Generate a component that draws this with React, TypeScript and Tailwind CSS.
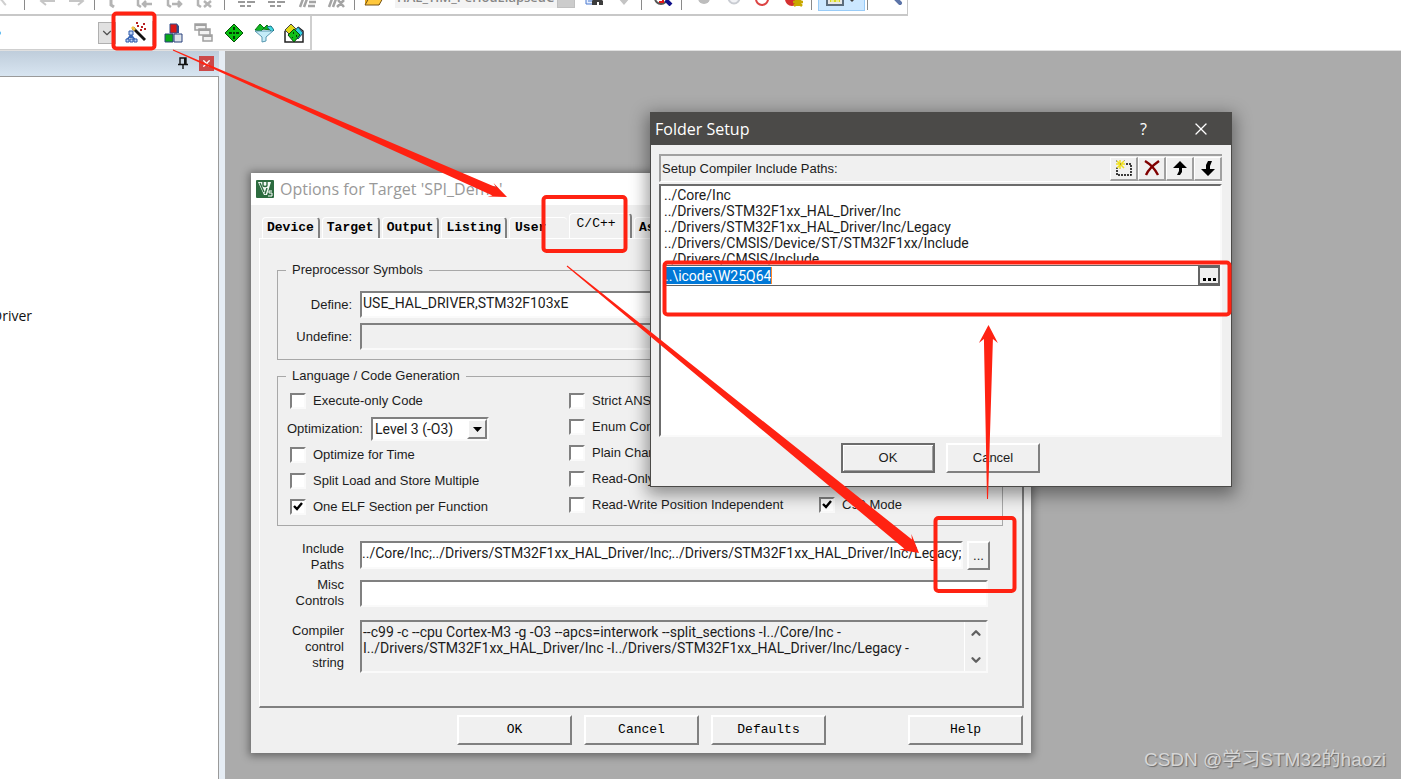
import type { ReactNode } from "react";
import { ChevronDown, ChevronUp, X } from "lucide-react";

const sunken = "border-2 border-t-[#808080] border-l-[#808080] border-r-[#fafafa] border-b-[#fafafa]";
const raised = "border-2 border-t-white border-l-white border-r-[#808080] border-b-[#808080]";
const fieldText = "font-['Roboto',sans-serif] text-[14px]";

const Separator = () => <span className="h-[18px] w-px shrink-0 bg-[#8a8a8a]" />;

const ToolButton = ({ label, children }: { label: string; children: ReactNode }) => (
  <button type="button" aria-label={label} className="flex w-[30px] shrink-0 justify-center">
    {children}
  </button>
);

const Icon = ({ children }: { children: ReactNode }) => (
  <svg width="20" height="20" viewBox="0 0 20 20" fill="none">
    {children}
  </svg>
);

const TopToolbar = () => (
  <div className="flex h-4 w-[908px] items-end border-r border-b-2 border-[#c8c8c8] bg-white pb-1">
    <div className="flex w-6 shrink-0 pb-1">
      <Icon>
        <path d="M0 13c3 1 3 4 6 6" stroke="#d0d0d0" strokeWidth="2" />
      </Icon>
    </div>
    <Separator />
    <div className="flex w-[69px] shrink-0 pb-1 pl-[7px]">
      <ToolButton label="Back">
        <Icon>
          <path d="M18 15H4M9 10l-5 5 5 4" stroke="#c6c6c6" strokeWidth="2" />
        </Icon>
      </ToolButton>
      <ToolButton label="Forward">
        <Icon>
          <path d="M2 15h14M11 10l5 5-5 4" stroke="#c6c6c6" strokeWidth="2" />
        </Icon>
      </ToolButton>
    </div>
    <Separator />
    <div className="flex w-[129px] shrink-0 pl-1">
      <ToolButton label="Bookmark">
        <Icon>
          <path d="M7 8v7l3 2" stroke="#b4b4b4" strokeWidth="3" />
        </Icon>
      </ToolButton>
      <ToolButton label="Previous bookmark">
        <Icon>
          <path d="M4 8v7l3 2M18 14h-9M12 11l-3 3 3 3" stroke="#b4b4b4" strokeWidth="2.5" />
        </Icon>
      </ToolButton>
      <ToolButton label="Next bookmark">
        <Icon>
          <path d="M4 8v7l3 2M8 14h9M14 11l3 3-3 3" stroke="#b4b4b4" strokeWidth="2.5" />
        </Icon>
      </ToolButton>
      <ToolButton label="Clear bookmarks">
        <Icon>
          <path d="M4 8v7l3 2M10 11l7 6M17 11l-7 6" stroke="#b4b4b4" strokeWidth="2.5" />
        </Icon>
      </ToolButton>
    </div>
    <Separator />
    <div className="flex w-[129px] shrink-0 pb-px pl-[7px]">
      <ToolButton label="Indent">
        <Icon>
          <path d="M1 13h7M10 13h8M3 17h5M10 17h4" stroke="#9a9a9a" strokeWidth="2" />
        </Icon>
      </ToolButton>
      <ToolButton label="Unindent">
        <Icon>
          <path d="M1 13h7M10 13h8M3 17h5M10 17h4" stroke="#9a9a9a" strokeWidth="2" />
        </Icon>
      </ToolButton>
      <ToolButton label="Comment">
        <Icon>
          <path d="M3 18l3-8M7 18l3-8M12 13h7M11 17h7" stroke="#a4a4a4" strokeWidth="2.5" />
        </Icon>
      </ToolButton>
      <ToolButton label="Uncomment">
        <Icon>
          <path d="M2 18l3-8M6 18l3-8M11 11l6 7M17 11l-7 7" stroke="#a4a4a4" strokeWidth="2.5" />
        </Icon>
      </ToolButton>
    </div>
    <Separator />
    <div className="flex w-10 shrink-0 pb-1 pl-1">
      <ToolButton label="Open">
        <Icon>
          <path d="M1 8h15v11H1z" fill="#e8a91c" />
          <path d="M5 12h14l-4 7H1z" fill="#ffc83c" stroke="#765315" />
        </Icon>
      </ToolButton>
    </div>
    <div className="mb-0.5 flex h-[22px] w-[180px] shrink-0 items-center bg-[#f3f3f3]">
      <select
        aria-label="Find text"
        className="h-[22px] min-w-0 flex-1 appearance-none overflow-hidden pl-0.5 font-['Open_Sans',sans-serif] text-[13px] leading-5 font-semibold text-[#868686]"
      >
        <option>HAL_TIM_PeriodElapsedC</option>
      </select>
      <span className="flex h-[22px] w-[18px] items-center justify-center border border-[#c0c0c0] bg-[#cccccc]">
        <ChevronDown size={12} color="#9a9a9a" />
      </span>
    </div>
    <div className="flex w-[66px] shrink-0 pb-1 pl-1">
      <ToolButton label="Find in files">
        <Icon>
          <path d="M2 8h9v10H2z" fill="#e8f0ff" stroke="#4c7bd0" />
          <path d="M4 12h6M4 15h6" stroke="#4c7bd0" />
          <path d="M8 19v-4l3-4 2 3 2-3 4 4v4h-4v-3h-2v3z" fill="#3c3c3c" />
        </Icon>
      </ToolButton>
      <ToolButton label="Find next">
        <Icon>
          <path d="M7 6h5v6h4l-6 7-6-7h3z" fill="#c4c4c4" />
        </Icon>
      </ToolButton>
    </div>
    <Separator />
    <div className="flex w-[39px] shrink-0 pb-1 pl-1.5">
      <ToolButton label="Debug">
        <Icon>
          <circle cx="8" cy="12" r="6" fill="#fff" stroke="#555" strokeWidth="2" />
          <path d="M6 13c0-3 4-3 4 0v4M6 16h4" stroke="#e01818" strokeWidth="2" />
          <path d="M13 14l5 5" stroke="#10108a" strokeWidth="4" />
        </Icon>
      </ToolButton>
    </div>
    <Separator />
    <div className="flex w-[129px] shrink-0 pb-px pl-[7px]">
      <ToolButton label="Insert breakpoint">
        <Icon>
          <circle cx="10" cy="9" r="6" fill="#bdbdbd" />
        </Icon>
      </ToolButton>
      <ToolButton label="Enable breakpoint">
        <Icon>
          <circle cx="10" cy="9" r="5.5" fill="#f2f3f6" stroke="#c9ccd2" strokeWidth="2" />
        </Icon>
      </ToolButton>
      <ToolButton label="Disable breakpoints">
        <Icon>
          <circle cx="8" cy="10" r="6" fill="#fff" stroke="#dc4444" strokeWidth="2" />
          <path d="M13 12l6-3V6z" fill="#dc4444" />
        </Icon>
      </ToolButton>
      <ToolButton label="Kill breakpoints">
        <Icon>
          <circle cx="8" cy="10" r="7" fill="#d43030" />
          <path d="M10 9l8 8M18 9l-8 8M14 8v9M9 13h10" stroke="#c9a800" strokeWidth="2.5" />
        </Icon>
      </ToolButton>
    </div>
    <Separator />
    <div className="flex w-[55px] shrink-0 pl-1.5">
      <button
        type="button"
        aria-label="Project window"
        className="-mb-px flex w-[47px] items-center gap-1 border border-[#99ccf8] bg-[#cce7ff] pb-1 pl-1.5"
      >
        <Icon>
          <path d="M2 3h16v16H2z" fill="#e8e8e8" stroke="#5c6c7c" strokeWidth="2" />
          <path d="M5 6h10v10H5z" fill="#d8d820" />
          <path d="M6 15h3M11 15h3M6 12h8" stroke="#fff" />
        </Icon>
        <svg width="6" height="16">
          <path d="M0 11h6l-3 3z" fill="#404040" />
        </svg>
      </button>
    </div>
    <Separator />
    <div className="flex shrink-0 pb-1 pl-2.5">
      <ToolButton label="Configuration">
        <Icon>
          <path d="M4 4l13 13" stroke="#5c74a8" strokeWidth="4" strokeLinecap="round" />
        </Icon>
      </ToolButton>
    </div>
  </div>
);

const BuildToolbar = () => (
  <div className="flex h-[34px] w-[312px] items-center border-r-2 border-b border-[#cfcfcf] bg-white">
    <svg width="98" height="20">
      <circle cx="-1" cy="10" r="2" fill="#58b8f0" />
    </svg>
    <button
      type="button"
      aria-label="Select target"
      className="flex h-[22px] w-[18px] items-center justify-center border border-[#b0b0b0] bg-[#e1e1e1]"
    >
      <ChevronDown size={14} color="#505050" />
    </button>
    <div className="flex w-9 justify-end">
      <button type="button" aria-label="Options for Target" className="w-[27px]">
        <svg width="22" height="22" viewBox="0 0 22 22">
          <path d="M8 6l12 12" stroke="#111" strokeWidth="2.8" />
          <path d="M7 5l3 3" stroke="#f0c040" strokeWidth="2.8" />
          <path d="M12 4h2M16 5h2M11 1h2M18 2h2M15 8h2M19 7h2" stroke="#b82020" strokeWidth="2" />
          <path d="M6 10v6M6 13l-4 5M6 13l4 5" stroke="#3868b8" strokeWidth="2" fill="none" />
          <path d="M4 9h4v4H4zM1 17h3v3H1zM5 17h3v3H5zM9 17h3v3H9z" fill="#bcd4f8" stroke="#2c58a8" />
        </svg>
      </button>
    </div>
    <span className="h-6 w-px bg-[#c0c0c0]" />
    <div className="flex pl-1.5">
      <ToolButton label="Manage project items">
        <Icon>
          <path d="M6 1h7v9H6z" fill="#d81818" stroke="#30508c" />
          <path d="M13 1l2 2v7h-2z" fill="#30508c" />
          <path d="M1 11h8v8H1z" fill="#08a818" stroke="#28407c" />
          <path d="M10 11h8v8h-8z" fill="#dde4ea" stroke="#28407c" />
        </Icon>
      </ToolButton>
      <ToolButton label="Windows">
        <Icon>
          <path d="M1 1h11v6H1zM5 6h11v6H5zM9 12h9v6H9z" fill="#f2f2f2" stroke="#a0a0a0" strokeWidth="1.5" />
          <path d="M1 2h11M5 7h11M9 13h9" stroke="#a0a0a0" strokeWidth="2" />
        </Icon>
      </ToolButton>
      <ToolButton label="Manage run-time environment">
        <Icon>
          <path d="M10 1l9 9-9 9-9-9z" fill="#08c010" stroke="#064c08" />
          <path d="M9 4h2v3H9zM5 9h3v2H5zM12 9h3v2h-3zM9 13h2v3H9zM9 9h2v2H9z" fill="#033c05" />
        </Icon>
      </ToolButton>
      <ToolButton label="Select software packs">
        <Icon>
          <path d="M1 7l5-6 4 4-3 3zM9 6l4-4 4 5z" fill="#10b820" stroke="#087010" />
          <path d="M13 4l4-1 3 4-2 2z" fill="#40d8e0" stroke="#187080" />
          <path d="M1 8h18l-7 6v4l-4 1v-5z" fill="#c4ecf8" stroke="#5898b0" />
        </Icon>
      </ToolButton>
      <ToolButton label="Pack installer">
        <Icon>
          <path d="M1 8l5-4M14 4l5 4v11H1V8" stroke="#222" strokeWidth="1.5" />
          <path d="M7 1l6 6-6 6-6-6z" fill="#e0d818" stroke="#444" />
          <path d="M14 4l5 6-5 6-5-6z" fill="#30d0e0" stroke="#246" />
          <path d="M10 6l6 6-6 7-6-7z" fill="#10c018" stroke="#064c08" />
          <path d="M9 9h1v2H9zM12 12h1v2h-1zM8 14h1v1H8z" fill="#033c05" />
        </Icon>
      </ToolButton>
    </div>
  </div>
);

const ProjectPane = () => (
  <aside className="flex w-[225px] flex-1 flex-col bg-[#e6edf4] pr-1.5">
    <div className="flex h-[25px] items-center justify-end gap-[11px] bg-linear-to-b from-[#bfcddb] to-[#d8e5f1] pr-[5px] pb-px">
      <button type="button" aria-label="Pin">
        <svg width="10" height="12" viewBox="0 0 10 12">
          <path d="M2 7V1h6v6M0 7.5h10M5 8v4" stroke="#111" strokeWidth="1.4" fill="none" />
          <path d="M6 1h2v6H6z" fill="#111" />
        </svg>
      </button>
      <button type="button" aria-label="Close" className="flex size-[15px] items-center justify-center bg-[#cc4848]">
        <X size={11} strokeWidth={3} color="#ffffff" />
      </button>
    </div>
    <div className="flex-1 overflow-hidden border-t border-r border-[#9a9a9a] bg-white pt-[231px]">
      <p className="-ml-2 font-['Open_Sans',sans-serif] text-[14px] leading-4 text-[#111111]">Driver</p>
    </div>
  </aside>
);

const Check = ({ label, checked = false }: { label: string; checked?: boolean }) => (
  <label className="flex h-[26px] items-center gap-[7px] whitespace-nowrap">
    <input
      type="checkbox"
      defaultChecked={checked}
      className={`peer size-4 shrink-0 appearance-none bg-white ${sunken}`}
    />
    <svg width="10" height="10" viewBox="0 0 10 10" className="-ml-5 mr-[3px] hidden peer-checked:block">
      <path d="M1 4l3 3 5-6" stroke="#000" strokeWidth="2.4" fill="none" />
    </svg>
    {label}
  </label>
);

const Tab = ({ label }: { label: string }) => (
  <button
    type="button"
    role="tab"
    aria-selected={false}
    className="h-[21px] rounded-t-sm border-t border-r-2 border-l border-t-white border-r-[#808080] border-l-white px-1 font-bold"
  >
    {label}
  </button>
);

const DialogButton = ({ label, className = "" }: { label: string; className?: string }) => (
  <button type="button" className={`h-[30px] w-[115px] ${raised} ${className}`}>
    {label}
  </button>
);

const OptionsDialog = () => (
  <section
    aria-label="Options for Target"
    className="absolute top-[173px] left-[251px] w-[780px] bg-[#f0f0f0] font-['Liberation_Sans',sans-serif] text-[13px] leading-4 text-[#1c1c1c] shadow-[0_1px_8px_2px_rgba(0,0,0,0.4)]"
  >
    <header className="flex h-8 items-center gap-[6px] bg-white pl-[5px]">
      <svg width="18" height="18" viewBox="0 0 18 18">
        <rect width="18" height="18" rx="1" fill="#2c6b3f" />
        <path d="M2 2h13l-4 13H8z" fill="#f4f9f5" />
        <path d="M7 1v4c0 2 4 2 4 0V1M4 3l4 9M9 14l2-6" stroke="#2c6b3f" strokeWidth="1.4" fill="none" />
        <path d="M16 11h-3v2h3v3h-4" stroke="#fff" fill="none" />
      </svg>
      <h1 className="font-['Open_Sans',sans-serif] text-[16px] text-[#999999]">Options for Target 'SPI_Demo'</h1>
    </header>
    <div className="px-2 pt-2 pb-2">
      <div role="tablist" className="flex h-[25px] items-end gap-0.5 overflow-hidden pl-[3px] font-['Liberation_Mono',monospace] text-[13px] text-black">
        <Tab label="Device" />
        <Tab label="Target" />
        <Tab label="Output" />
        <Tab label="Listing" />
        <button
          type="button"
          role="tab"
          aria-selected={false}
          className="h-[21px] w-[58px] rounded-t-sm border-t border-l border-white pl-[5px] text-left font-bold"
        >
          User
        </button>
        <button
          type="button"
          role="tab"
          aria-selected
          className="h-[25px] w-[63px] rounded-t-sm border-t border-r-2 border-l border-t-white border-r-[#808080] border-l-white pr-2 pb-1"
        >
          C/C++
        </button>
        <Tab label="Asm" />
      </div>
      <div className="w-[765px] border-t border-r-2 border-b-2 border-l border-t-white border-r-[#808080] border-b-[#808080] border-l-white pt-[23px] pr-[19px] pb-[33px] pl-[17px]">
        <fieldset className="flex flex-col gap-[5px] border border-[#a8a8a8] pt-[13px] pb-[9px]">
          <legend className="ml-2 px-[6px]">Preprocessor Symbols</legend>
          <div className="flex items-center gap-2 pr-4">
            <label htmlFor="define" className="w-[74px] text-right">Define:</label>
            <input
              id="define"
              defaultValue="USE_HAL_DRIVER,STM32F103xE"
              className={`h-[27px] min-w-0 flex-1 bg-white pb-1 pl-px ${fieldText} ${sunken}`}
            />
          </div>
          <div className="flex items-center gap-2 pr-4">
            <label htmlFor="undefine" className="w-[74px] text-right">Undefine:</label>
            <input id="undefine" className={`h-[27px] min-w-0 flex-1 ${sunken}`} />
          </div>
        </fieldset>
        <fieldset className="mt-2 flex border border-[#a8a8a8] pt-1 pb-[5px]">
          <legend className="ml-2 px-[6px]">Language / Code Generation</legend>
          <div className="w-[291px] pl-3">
            <Check label="Execute-only Code" />
            <div className="-ml-1 mt-0.5 flex h-[26px] items-center gap-2">
              <label htmlFor="optimization" className="w-[77px] pl-px">Optimization:</label>
              <div className={`flex h-6 w-[118px] bg-white ${sunken}`}>
                <select id="optimization" className={`min-w-0 flex-1 appearance-none pl-0.5 ${fieldText}`}>
                  <option>Level 3 (-O3)</option>
                </select>
                <span className={`flex w-5 items-center justify-center bg-[#f0f0f0] ${raised}`}>
                  <svg width="9" height="5">
                    <path d="M0 0h9L4.500 5z" fill="#000" />
                  </svg>
                </span>
              </div>
            </div>
            <Check label="Optimize for Time" />
            <Check label="Split Load and Store Multiple" />
            <Check label="One ELF Section per Function" checked />
          </div>
          <div className="w-[250px]">
            <Check label="Strict ANSI C" />
            <Check label="Enum Container always int" />
            <Check label="Plain Char is Signed" />
            <Check label="Read-Only Position Independent" />
            <Check label="Read-Write Position Independent" />
          </div>
          <div className="flex flex-col justify-end pb-0.5">
            <Check label="C99 Mode" checked />
          </div>
        </fieldset>
        <div className="mt-[15px] mr-[13px] flex gap-4">
          <label htmlFor="include-paths" className="w-[67px] pl-4 text-right">Include Paths</label>
          <div className="flex min-w-0 flex-1 items-start gap-1">
            <input
              id="include-paths"
              defaultValue="../Core/Inc;../Drivers/STM32F1xx_HAL_Driver/Inc;../Drivers/STM32F1xx_HAL_Driver/Inc/Legacy;"
              className={`h-7 min-w-0 flex-1 bg-white pb-1 ${fieldText} ${sunken}`}
            />
            <button type="button" aria-label="Edit include paths" className={`h-[29px] w-[23px] ${raised}`}>
              ...
            </button>
          </div>
        </div>
        <div className="mt-1 mr-[15px] flex items-center gap-4">
          <label htmlFor="misc-controls" className="w-[67px] pl-4 text-right">Misc Controls</label>
          <input id="misc-controls" className={`h-[27px] min-w-0 flex-1 bg-white ${sunken}`} />
        </div>
        <div className="mt-[11px] mr-[15px] flex items-center gap-4">
          <label htmlFor="control-string" className="w-[67px] pl-2 text-right">Compiler control string</label>
          <div className={`flex h-[53px] min-w-0 flex-1 ${sunken}`}>
            <textarea
              id="control-string"
              readOnly
              className={`min-w-0 flex-1 resize-none overflow-hidden pt-0.5 pl-px whitespace-pre ${fieldText}`}
              defaultValue={
                "--c99 -c --cpu Cortex-M3 -g -O3 --apcs=interwork --split_sections -I../Core/Inc -\nI../Drivers/STM32F1xx_HAL_Driver/Inc -I../Drivers/STM32F1xx_HAL_Driver/Inc/Legacy -"
              }
            />
            <div className="flex w-[22px] flex-col items-center justify-between border-l border-white py-1">
              <button type="button" aria-label="Scroll up">
                <ChevronUp size={14} strokeWidth={4} color="#606060" />
              </button>
              <button type="button" aria-label="Scroll down">
                <ChevronDown size={14} strokeWidth={4} color="#606060" />
              </button>
            </div>
          </div>
        </div>
      </div>
      <div className="mt-[7px] flex justify-end gap-3 font-['Liberation_Mono',monospace] text-[13px] text-black">
        <DialogButton label="OK" />
        <DialogButton label="Cancel" />
        <DialogButton label="Defaults" />
        <DialogButton label="Help" className="ml-[70px]" />
      </div>
    </div>
  </section>
);

const paths = [
  "../Core/Inc",
  "../Drivers/STM32F1xx_HAL_Driver/Inc",
  "../Drivers/STM32F1xx_HAL_Driver/Inc/Legacy",
  "../Drivers/CMSIS/Device/ST/STM32F1xx/Include",
  "../Drivers/CMSIS/Include",
];

const PathButton = ({ label, children }: { label: string; children: ReactNode }) => (
  <button
    type="button"
    aria-label={label}
    className="flex h-6 w-7 items-center justify-center border-t border-r-2 border-b-2 border-l border-t-white border-r-[#a0a0a0] border-b-[#a0a0a0] border-l-white"
  >
    <svg width="18" height="17" viewBox="0 0 18 17" fill="none">
      {children}
    </svg>
  </button>
);

const FolderDialog = () => (
  <section
    aria-label="Folder Setup"
    className="absolute top-[112px] left-[650px] w-[582px] border border-[#4b4a48] bg-[#f0f0f0] font-['Liberation_Sans',sans-serif] text-[13px] leading-4 text-[#1c1c1c] shadow-[0_5px_16px_3px_rgba(0,0,0,0.4)]"
  >
    <header className="flex h-8 items-center bg-[#4b4a48] pr-px pl-1 font-['Open_Sans',sans-serif] text-[16px] text-white">
      <h2 className="flex-1">Folder Setup</h2>
      <button type="button" aria-label="Help" className="w-[57px]">?</button>
      <button type="button" aria-label="Close" className="flex w-[58px] justify-center">
        <X size={20} strokeWidth={1.5} />
      </button>
    </header>
    <div className="pt-[9px] pr-[9px] pb-[13px] pl-2">
      <div className="flex h-7 items-center justify-between border-t-2 border-b border-l-2 border-t-[#a0a0a0] border-b-white border-l-[#a0a0a0] pl-px">
        <span>Setup Compiler Include Paths:</span>
        <div className="flex">
          <PathButton label="New">
            <path d="M2 4h14v11H2z" stroke="#000" strokeWidth="1.5" strokeDasharray="2 1" />
            <path d="M1 1h9v7H1z" fill="#f0f0f0" />
            <path d="M2 1l7 7M9 1L2 8M5 0v9M1 4h9" stroke="#f0e020" strokeWidth="1.5" />
            <path d="M1 1h1M1 8h1M9 0h1M5 4h1" stroke="#555" />
          </PathButton>
          <PathButton label="Delete">
            <path d="M2 1c5 3 10 8 13 14M16 1C9 6 5 10 3 15" stroke="#800000" strokeWidth="2.4" />
          </PathButton>
          <PathButton label="Move up">
            <path d="M9 1l7 7h-5v4l-2 3H6l2-4V8H2z" fill="#000" />
          </PathButton>
          <PathButton label="Move down">
            <path d="M9 16l7-7h-5V6l2-5H9L7 5v4H2z" fill="#000" />
          </PathButton>
        </div>
      </div>
      <div className="mt-0.5 h-[253px] border-2 border-t-[#6c6c6c] border-r-[#fafafa] border-b-[#fafafa] border-l-[#6c6c6c] bg-white pt-px">
        <ul className={fieldText}>
          {paths.map((path) => (
            <li key={path} className="h-4 pl-[3px] leading-4 last:h-[14px] last:overflow-hidden">
              {path}
            </li>
          ))}
        </ul>
        <div className="ml-0.5 flex h-[21px] items-stretch border-y border-[#646464]">
          <input
            aria-label="Include path"
            defaultValue="..\icode\W25Q64"
            className={`my-px ml-0.5 w-[107px] border-r border-[#ff8728] bg-[#0078d7] text-white ${fieldText}`}
          />
          <span className="flex-1" />
          <button
            type="button"
            aria-label="Browse"
            className="flex w-[22px] items-end justify-center border-2 border-[#646464] bg-[#f0f0f0] pb-0.5 text-black"
          >
            <svg width="13" height="3">
              <path d="M0 0h3v3H0zM5 0h3v3H5zM10 0h3v3h-3z" fill="#000" />
            </svg>
          </button>
        </div>
      </div>
      <div className="mt-[6px] flex justify-center gap-[11px]">
        <button
          type="button"
          className="h-[30px] w-[94px] border-2 border-[#6c6c6c] shadow-[inset_1px_1px_0_#ffffff,inset_-1px_-1px_0_#a0a0a0]"
        >
          OK
        </button>
        <button type="button" className={`h-[30px] w-[94px] ${raised}`}>
          Cancel
        </button>
      </div>
    </div>
  </section>
);

type ArrowProps = { x: number; y: number; toX: number; toY: number; body: number; head: number };

// Tapered arrow: a point at the tail, widest just before the head
const Arrow = ({ x, y, toX, toY, body, head }: ArrowProps) => {
  const length = Math.hypot(toX - x, toY - y);
  const angle = (Math.atan2(toY - y, toX - x) * 180) / Math.PI;
  const neck = length - 14;
  const barb = length - 18;
  return (
    <path
      transform={`translate(${x} ${y}) rotate(${angle})`}
      d={`M0 -0.5L${neck} ${-body}L${barb} ${-head}L${length} 0L${barb} ${head}L${neck} ${body}L0 0.5z`}
    />
  );
};

const Annotations = () => (
  <svg className="pointer-events-none absolute inset-0 size-full" fill="#ff2212" aria-hidden="true">
    <g fill="none" stroke="#ff2212" strokeWidth="4">
      <rect x="113.500" y="13.500" width="41" height="35" rx="3" />
      <rect x="543.500" y="197" width="82" height="54" rx="3" />
      <rect x="935.500" y="518" width="79" height="73" rx="3" />
      <rect x="664.500" y="262.500" width="565" height="52" rx="3" />
    </g>
    <Arrow x={173} y={50} toX={507} toY={197} body={4.5} head={7.5} />
    <Arrow x={567} y={266} toX={919} toY={553} body={6} head={10} />
    <Arrow x={987.5} y={499} toX={988.5} toY={325} body={4.5} head={9.5} />
  </svg>
);

export default function App() {
  return (
    <main className="relative flex min-h-screen flex-col overflow-hidden bg-[#ababab]">
      <div className="border-b border-[#e0e0e0] bg-white">
        <TopToolbar />
        <BuildToolbar />
      </div>
      <ProjectPane />
      <OptionsDialog />
      <FolderDialog />
      <Annotations />
      <p className="absolute right-[15px] bottom-[7px] font-['Liberation_Sans','Noto_Sans_CJK_SC',sans-serif] text-[19px] leading-6 text-[#d6d6d6] [text-shadow:1px_1px_1px_#6a6a6a]">
        CSDN @学习STM32的haozi
      </p>
    </main>
  );
}
